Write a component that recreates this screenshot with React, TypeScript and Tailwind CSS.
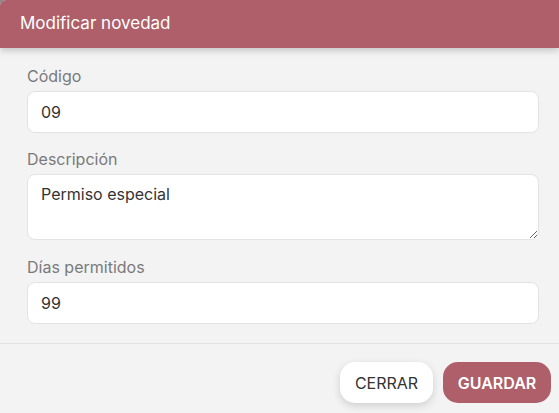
export default function App() {
  return (
    <div className="h-[413px] w-[559px] overflow-hidden bg-[#8c8c8c] font-['Inter','Liberation_Sans',sans-serif]">
      <div className="flex h-full flex-col rounded-tl-md bg-[#f3f3f3]">
        <header className="relative z-10 flex h-12 items-center rounded-tl-md bg-[#ae5f6a] pl-5 shadow-[0_3px_6px_rgba(0,0,0,0.18)]">
          <h1 className="text-[17px] text-white">Modificar novedad</h1>
        </header>

        <form className="flex flex-col pl-[27px] pr-5 pt-[18px]">
          <label className="text-[16px] leading-5 text-[#7a7a7a]">Código</label>
          <input
            defaultValue="09"
            className="mt-[5px] h-[42px] rounded-lg border border-[#e3e3e3] bg-white px-[13px] text-[16px] text-[#333] outline-none"
          />

          <label className="mt-4 text-[16px] leading-5 text-[#7a7a7a]">Descripción</label>
          <textarea
            defaultValue="Permiso especial"
            className="mt-[5px] h-[66px] rounded-lg border border-[#e3e3e3] bg-white px-[13px] py-[9px] text-[16px] leading-5 text-[#333] outline-none"
          />

          <label className="mt-[17px] text-[16px] leading-5 text-[#7a7a7a]">Días permitidos</label>
          <input
            defaultValue="99"
            className="mt-[5px] h-[42px] rounded-lg border border-[#e3e3e3] bg-white px-[13px] text-[16px] text-[#333] outline-none"
          />
        </form>

        <div className="mt-[19px] border-t border-[#e2e2e2]" />

        <div className="flex justify-end gap-[10px] pr-2 pt-[18px]">
          <button className="h-[41px] w-[93px] rounded-[15px] bg-white text-[16px] text-[#333] shadow-[0_3px_8px_rgba(0,0,0,0.15)]">
            CERRAR
          </button>
          <button className="h-[41px] w-[108px] rounded-[15px] bg-[#ae5f6a] text-[16px] font-semibold text-white">
            GUARDAR
          </button>
        </div>
      </div>
    </div>
  )
}
